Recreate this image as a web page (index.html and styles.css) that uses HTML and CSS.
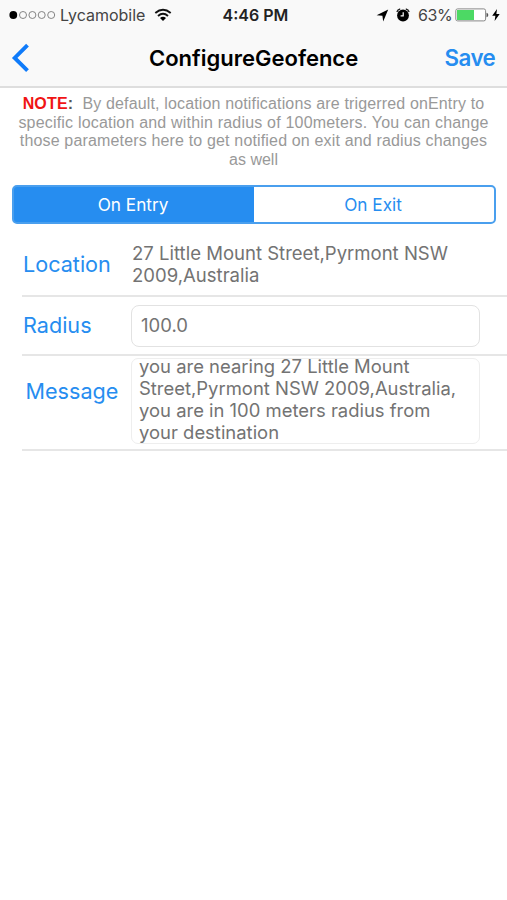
FILE: index.html
```html
<!DOCTYPE html>
<html lang="en">
<head>
<meta charset="utf-8">
<title>ConfigureGeofence</title>
<link rel="stylesheet" href="styles.css">
</head>
<body>
<header class="top">
  <div class="status">
    <div class="carrier">
      <svg class="signal" width="48" height="10" viewBox="0 0 48 10"><circle cx="5.3" cy="5" r="3.9"/><g fill="none" stroke="#777" stroke-width=".9"><circle cx="15" cy="5" r="3.5"/><circle cx="24.4" cy="5" r="3.5"/><circle cx="33.7" cy="5" r="3.5"/><circle cx="43.2" cy="5" r="3.5"/></g></svg>
      <span class="network">Lycamobile</span>
      <svg class="wifi" width="18" height="14" viewBox="0 0 18 14"><g fill="none" stroke="#111" stroke-width="1.9"><path d="M1.3 5Q9-1.4 16.7 5"/><path d="M4 8Q9 3.6 14 8"/></g><path d="M6 10Q9 7.5 12 10L9 13Z"/></svg>
    </div>
    <span class="time">4:46 PM</span>
    <div class="indicators">
      <svg class="locate" width="13" height="13" viewBox="0 0 13 13"><path d="M12.2.6 7.2 12.5 6.4 6.8.6 6.2Z"/></svg>
      <svg class="alarm" width="14" height="14" viewBox="0 0 14 14"><circle cx="7" cy="7.5" r="5.9"/><path d="M.9 4Q1.5 1.5 4.2 1M9.8 1Q12.5 1.5 13.1 4" fill="none" stroke="#222" stroke-width="1.3"/><path d="M7.2 4.2V7.8H4.6" fill="none" stroke="#fff" stroke-width="1.2"/></svg>
      <span class="percent">63%</span>
      <svg class="battery" width="34" height="14" viewBox="0 0 34 14"><rect x=".8" y=".9" width="29.8" height="12" rx="1.8" fill="#fff" stroke="#888"/><path d="M2 2H19V12H2Z" fill="#4cd964"/><path d="M31.5 4.7Q33.3 5 33.3 7T31.5 9.3Z" fill="#555"/></svg>
      <svg class="bolt" width="8" height="12" viewBox="0 0 8 12"><path d="M5 0 .2 6.7H3.4L2.6 12 7.7 5H4.4Z"/></svg>
    </div>
  </div>
  <nav class="nav">
    <svg class="back" width="19" height="30" viewBox="0 0 19 30"><path d="M17.5 2.2 4.7 14.9 17.5 27.6" fill="none" stroke="#0f7bfa" stroke-width="3.9"/></svg>
    <h1 class="title">ConfigureGeofence</h1>
    <span class="save">Save</span>
  </nav>
</header>
<main>
  <p class="note">
    <span class="n1"><b>NOTE</b><strong>:</strong>&nbsp; By default, location notifications are trigerred onEntry to</span>
    <span class="n2">specific location and within radius of 100meters. You can change</span>
    <span class="n3">those parameters here to get notified on exit and radius changes</span>
    <span class="n4">as well</span>
  </p>
  <div class="segments">
    <span class="segment selected">On Entry</span>
    <span class="segment">On Exit</span>
  </div>
  <section class="form">
    <div class="row location">
      <span class="label">Location</span>
      <p class="value">27 Little Mount Street,Pyrmont NSW<br>2009,Australia</p>
    </div>
    <div class="row radius">
      <span class="label">Radius</span>
      <div class="field">100.0</div>
    </div>
    <div class="row message">
      <span class="label">Message</span>
      <div class="area"><p class="body">you are nearing 27 Little Mount<br>Street,Pyrmont NSW 2009,Australia,<br>you are in 100 meters radius from<br>your destination</p></div>
    </div>
  </section>
</main>
</body>
</html>
```
FILE: styles.css
```css
* { box-sizing: border-box; }
body { margin: 0; background: #fff; font-family: Inter, sans-serif; color: #737373; height: 900px; overflow: hidden; }
svg { display: block; flex: none; }
p, h1 { margin: 0; }
.top { height: 88px; background: #f9f9f9; border-bottom: 2px solid #dedede; color: #000; }
.status { height: 30px; display: grid; grid-template-columns: 222.5px 67.5px 1fr; align-items: center; white-space: nowrap; }
.carrier { display: flex; align-items: center; padding-left: 8px; }
.network { width: 85px; margin-left: 4px; font-size: 16px; color: #444; }
.wifi { margin-left: 9px; }
.time { font-size: 16px; font-weight: 600; color: #222; }
.indicators { display: flex; align-items: center; padding-left: 86px; }
.alarm { margin-left: 7px; }
.percent { width: 33px; margin-left: 8px; font-size: 16px; letter-spacing: -.4px; color: #444; }
.battery { margin-left: 4px; }
.bolt { margin-left: 3px; }
.nav { height: 56px; display: grid; grid-template-columns: 149px 295.5px 1fr; align-items: center; }
.back { margin-left: 10px; }
.title { font-size: 22px; line-height: 30px; font-weight: 600; }
.save { font-size: 22.3px; line-height: 30px; letter-spacing: -.5px; font-weight: 600; color: #268df0; }
.title, .save { margin-top: -1px; }
.note { padding-top: 7px; font: 16px/18.7px "Liberation Sans", sans-serif; color: #999; text-align: center; white-space: nowrap; }
.note span { display: block; }
.n1 { letter-spacing: .15px; }
.n2 { letter-spacing: .19px; }
.n3 { letter-spacing: .16px; }
.note b { color: #f01414; }
.note strong { color: #555; }
.segments { display: flex; width: 484px; height: 39px; margin: 15.5px 0 0 12px; border: 2px solid #4a9fee; border-radius: 5px; overflow: hidden; background: linear-gradient(90deg, #268df0 50%, #fff 50%) border-box; }
.segment { flex: 1; display: grid; place-items: center; font-size: 17.2px; color: #268df0; }
.segment.selected { flex: 0 0 238px; color: #fff; }
.form { margin: 8.5px 0 0 22px; }
.row { display: grid; grid-template-columns: 109px 1fr; border-bottom: 2px solid #e6e6e6; white-space: nowrap; }
.label { font-size: 21.6px; line-height: 30px; color: #268df0; }
.location { height: 64px; }
.location .label { padding: 16px 0 0 1px; }
.value { padding: 9px 0 0 1px; font-size: 18.55px; line-height: 22px; }
.radius { height: 59px; }
.radius .label { padding: 13px 0 0 1px; }
.field { width: 349px; height: 42px; margin-top: 8px; padding-left: 9px; border: 1.5px solid #e2e2e2; border-radius: 8px; font-size: 18.5px; line-height: 39px; }
.message { height: 95px; }
.message .label { padding: 20px 0 0 3.5px; }
.area { width: 349px; height: 86px; margin-top: 2px; padding-left: 7px; border: 1px solid #eee; border-radius: 7px; font-size: 18.45px; line-height: 22.2px; }
.body { margin-top: -4px; }
```
